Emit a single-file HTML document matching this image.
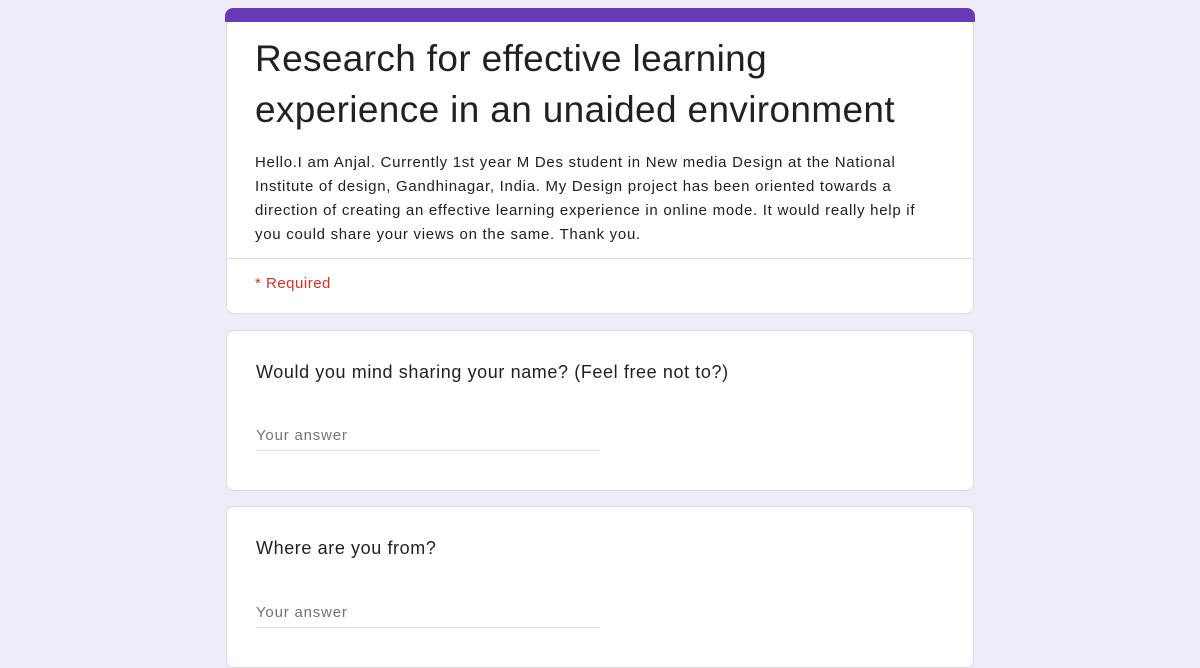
<!DOCTYPE html>
<html><head><style>
html,body{height:630px}
body{margin:0;background:#f0ebf8;width:1200px;overflow:hidden;font-family:"Liberation Sans",sans-serif;position:relative}
.card{position:absolute;left:226px;width:746px;background:#fff;border:1px solid #dadce0;border-radius:8px;box-sizing:content-box}
.bar{position:absolute;left:225px;top:8px;width:750px;height:14px;background:#673ab7;border-radius:8px 8px 0 0}
.t{position:absolute;left:29px;font-size:37px;line-height:51px;color:#202124;white-space:nowrap;letter-spacing:0.35px}
.d{position:absolute;left:29px;font-size:15px;line-height:24px;color:#202124;white-space:nowrap;letter-spacing:0.72px}
.q{position:absolute;left:29px;font-size:18px;color:#202124;letter-spacing:0.6px}
.a{position:absolute;left:29px;width:344px;border-bottom:1px solid #e0e0e0;font-size:15px;color:#70757a;padding-bottom:6px;letter-spacing:0.8px}
</style></head><body>
<div class="card" style="top:12px;height:301px;border-top:none;border-radius:0 0 8px 8px"></div>
<div class="bar"></div>
<div class="card" style="top:12px;height:301px;border:none;background:transparent">
<div class="t" style="top:21px">Research for effective learning<br>experience in an unaided environment</div>
<div class="d" style="top:139px">Hello.I am Anjal. Currently 1st year M Des student in New media Design at the National<br>Institute of design, Gandhinagar, India. My Design project has been oriented towards a<br>direction of creating an effective learning experience in online mode. It would really help if<br>you could share your views on the same. Thank you.</div>
<div style="position:absolute;left:0;top:246px;width:748px;height:1px;background:#dadce0"></div>
<div style="position:absolute;left:29px;top:263px;font-size:15px;color:#d93025;letter-spacing:0.5px">* Required</div>
</div>
<div class="card" style="top:330px;height:159px">
<div class="q" style="top:31px">Would you mind sharing your name? (Feel free not to?)</div>
<div class="a" style="top:96px">Your answer</div>
</div>
<div class="card" style="top:506px;height:160px">
<div class="q" style="top:31px">Where are you from?</div>
<div class="a" style="top:97px">Your answer</div>
</div>
</body></html>
